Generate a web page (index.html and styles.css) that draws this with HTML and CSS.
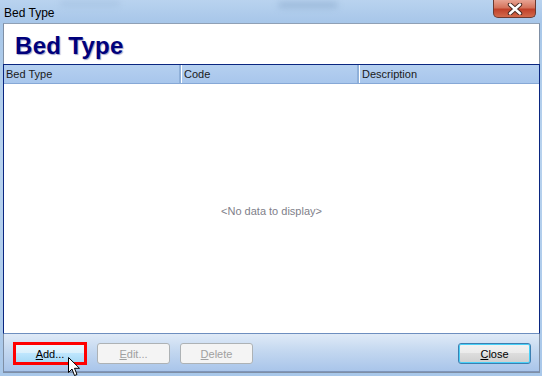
FILE: index.html
```html
<!DOCTYPE html>
<html lang="en">
<head>
<meta charset="UTF-8">
<title>Bed Type</title>
<link rel="stylesheet" href="styles.css">
</head>
<body>

<div class="window">
    <div class="titlebar">
        <span class="title">Bed Type</span>
        <span class="blur blur-1"></span>
        <span class="blur blur-2"></span>
        <button class="close-x">
            <svg width="18" height="12" viewBox="0 0 18 12">
                <path d="M4 1.5 L14 10.5 M14 1.5 L4 10.5" stroke="#4a2a22" stroke-width="4.4" stroke-linecap="round"/>
                <path d="M4 1.5 L14 10.5 M14 1.5 L4 10.5" stroke="#fff" stroke-width="2.4" stroke-linecap="round"/>
            </svg>
        </button>
    </div>

    <div class="client">
        <div class="heading">
            <h1>Bed Type</h1>
        </div>

        <div class="grid">
            <div class="grid-head">
                <div class="col col-name">Bed Type</div>
                <div class="col col-code">Code</div>
                <div class="col col-desc">Description</div>
            </div>
            <div class="grid-body">
                <span class="empty">&lt;No data to display&gt;</span>
            </div>
        </div>

        <div class="footer">
            <button class="btn btn-add"><u>A</u>dd...</button>
            <button class="btn" disabled><u>E</u>dit...</button>
            <button class="btn" disabled><u>D</u>elete</button>
            <span class="spacer"></span>
            <button class="btn btn-close"><u>C</u>lose</button>
        </div>
    </div>
</div>

<!-- mouse pointer over the Add button -->
<svg class="cursor" width="13" height="20" viewBox="0 0 13 20">
    <path d="M0.5 0.5 L0.5 15.5 L4 12 L6.5 18.5 L9 17.5 L6.5 11.3 L11.5 11.3 Z" fill="#fff" stroke="#000" stroke-width="1"/>
</svg>

</body>
</html>
```

FILE: styles.css
```css
body {
    margin: 0;
    width: 542px;
    height: 376px;
    overflow: hidden;
    font-family: "Liberation Sans", Arial, sans-serif;
    background: linear-gradient(to bottom, #a6c6e8 0%, #b7d2ee 40%, #a9c8ea 100%);
    position: relative;
}

.window {
    display: flex;
    flex-direction: column;
    height: 376px;
}

.titlebar {
    height: 23px;
    position: relative;
    display: flex;
    align-items: center;
    background: linear-gradient(to bottom, #b9d3ef 0%, #a7c6e9 100%);
}

.title {
    font-size: 12px;
    color: #000;
    padding-left: 4px;
    margin-top: 2px;
}

.blur {
    position: absolute;
    border-radius: 8px;
    filter: blur(3px);
    background: #8aa9cc;
    opacity: 0.6;
}

.blur-1 {
    left: 278px;
    top: 2px;
    width: 60px;
    height: 6px;
}

.blur-2 {
    left: 60px;
    top: 1px;
    width: 60px;
    height: 5px;
    opacity: 0.3;
}

.close-x {
    position: absolute;
    right: 6px;
    top: 0;
    width: 43px;
    height: 18px;
    padding: 0;
    border: 1px solid #6b3a31;
    border-top: none;
    border-radius: 0 0 5px 5px;
    background: linear-gradient(to bottom, #e8a493 0%, #d4735c 45%, #c0412a 55%, #d26a4c 100%);
    display: flex;
    align-items: center;
    justify-content: center;
}

.client {
    flex: 1;
    display: flex;
    flex-direction: column;
    margin: 0 2px 3px 3px;
    border: 1px solid #7f8fa5;
    border-top-color: #8fa0b5;
}

.heading {
    height: 40px;
    background: #fff;
    padding-left: 11px;
}

h1 {
    margin: 0;
    padding-top: 10px;
    font-size: 24px;
    font-weight: bold;
    color: #00007b;
    line-height: 24px;
    letter-spacing: 0.3px;
    text-shadow: 1px 1px 1px #a0a0c8;
}

.grid {
    flex: 1;
    display: flex;
    flex-direction: column;
    border: 1px solid #0a2680;
    border-bottom: 1px solid #6d8ebf;
    margin: 0 -1px;
    background: #fff;
}

.grid-head {
    display: flex;
    height: 18px;
    background: linear-gradient(to bottom, #b5d0f0 0%, #a8c6ec 100%);
    border-bottom: 1px solid #86a8d6;
}

.col {
    font-size: 11px;
    color: #1a1a1a;
    line-height: 19px;
    padding-left: 2px;
    border-right: 1px solid #fff;
    box-shadow: inset -2px 0 0 #8fb0d9;
    box-sizing: border-box;
}

.col-name {
    width: 178px;
}

.col-code {
    width: 178px;
}

.col-desc {
    flex: 1;
    border-right: none;
    box-shadow: none;
}

.grid-body {
    flex: 1;
    display: flex;
    align-items: center;
    justify-content: center;
}

.empty {
    font-size: 11px;
    color: #80808a;
    margin-top: 4px;
}

.footer {
    height: 37px;
    display: flex;
    align-items: center;
    padding: 0 8px 0 9px;
    gap: 10px;
    background: linear-gradient(to bottom, #dfeaf7 0%, #c4d8f0 45%, #a9c5ea 100%);
    border-bottom: 1px solid #7f96bb;
}

.spacer {
    flex: 1;
}

.btn {
    width: 73px;
    height: 21px;
    font-family: "Liberation Sans", Arial, sans-serif;
    font-size: 11px;
    color: #000;
    border: 1px solid #707070;
    border-radius: 3px;
    background: linear-gradient(to bottom, #f2f2f2 0%, #ebebeb 49%, #dddddd 50%, #cfcfcf 100%);
    padding: 0;
    margin-top: 2px;
}

.btn:disabled {
    color: #a0a0a0;
    border-color: #adb2b5;
    background: #f4f4f4;
}

.btn-add {
    width: 74px;
    height: 23px;
    border: 3px solid #f00;
    border-radius: 0;
    background: linear-gradient(to bottom, #eaf6fd 0%, #d9f0fc 49%, #bee6fd 50%, #a7d9f5 100%);
}

.btn-close {
    border-color: #3c7fb1;
    box-shadow: inset 0 0 0 1px #48d0f8;
}

.cursor {
    position: absolute;
    left: 68px;
    top: 357px;
}
```
